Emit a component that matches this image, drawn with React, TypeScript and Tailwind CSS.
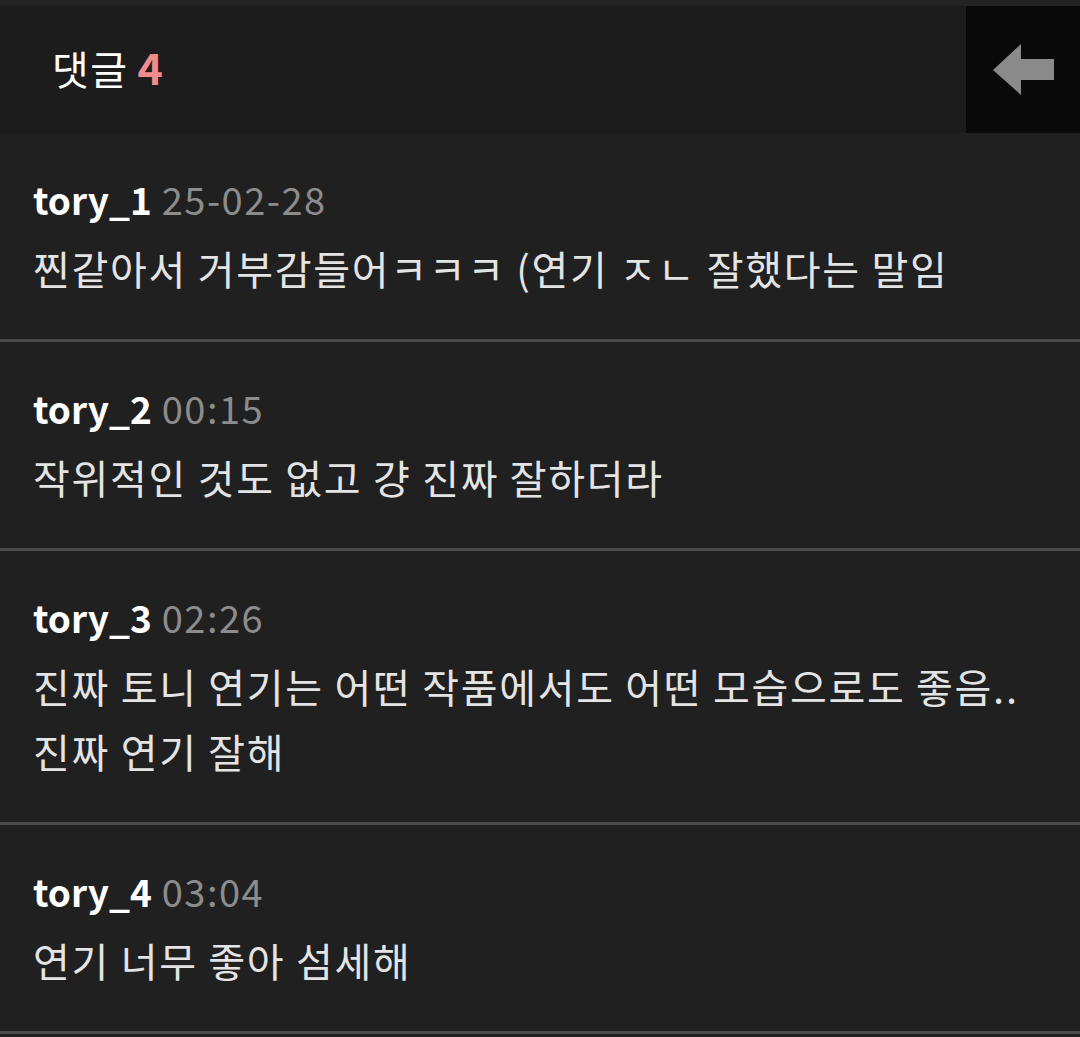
import React from 'react';

type Comment = {
  id: number;
  user: string;
  time: string;
  lines: string[];
};

const comments: Comment[] = [
  { id: 1, user: 'tory_1', time: '25-02-28', lines: ['찐같아서 거부감들어ㅋㅋㅋ (연기 ㅈㄴ 잘했다는 말임'] },
  { id: 2, user: 'tory_2', time: '00:15', lines: ['작위적인 것도 없고 걍 진짜 잘하더라'] },
  { id: 3, user: 'tory_3', time: '02:26', lines: ['진짜 토니 연기는 어떤 작품에서도 어떤 모습으로도 좋음..', '진짜 연기 잘해'] },
  { id: 4, user: 'tory_4', time: '03:04', lines: ['연기 너무 좋아 섬세해'] },
];

const BackArrow = () => (
  <svg width="62" height="52" viewBox="0 0 62 52">
    <path d="M0 26 L28 0 L28 15 L61 15 L61 36 L28 36 L28 51 Z" fill="#8a8a8a" />
  </svg>
);

const App = () => {
  return (
    <div
      className="min-h-[1037px] bg-[#202020]"
      style={{ fontFamily: '"Noto Sans CJK KR", "Noto Sans", sans-serif' }}
    >
      <div className="h-[6px] bg-[#232323]" />
      <div className="flex h-[127px] bg-[#1c1c1c]">
        <div className="flex flex-1 items-baseline pl-[52px] pt-[35px] text-white">
          <span className="text-[40px] tracking-[1.5px] leading-[50px]">댓글</span>
          <span className="ml-[9px] text-[43px] font-bold leading-[50px] text-[#f28b8b]">4</span>
        </div>
        <button className="flex w-[114px] items-center justify-center bg-[#0a0a0a] pl-[2px]">
          <BackArrow />
        </button>
      </div>

      <div>
        {comments.map((c) => (
          <div key={c.id} className="border-b-[3px] border-[#4b4b4b] px-[33px] pt-[34px] pb-[38px]">
            <div className="flex items-baseline gap-[10px] leading-[64px]">
              <span className="text-[37px] font-bold text-white">{c.user}</span>
              <span className="text-[38px] tracking-[1.5px] text-[#8c8c8c]">{c.time}</span>
            </div>
            <div className="mt-[5px] text-[40px] leading-[65px] tracking-[1.7px] text-[#e4e4e4]">
              {c.lines.map((l, i) => (
                <div key={i}>{l}</div>
              ))}
            </div>
          </div>
        ))}
      </div>
    </div>
  );
};

export default App;
